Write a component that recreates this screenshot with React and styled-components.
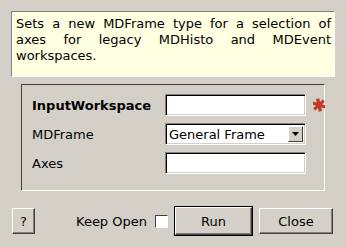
import styled, { createGlobalStyle } from 'styled-components';

const GlobalStyle = createGlobalStyle`
  html, body {
    margin: 0;
    padding: 0;
    background: #d4d0c8;
  }
  body {
    font-family: "DejaVu Sans", "Liberation Sans", sans-serif;
    font-size: 13px;
    color: #000000;
  }
`;

const Dialog = styled.div`
  width: 346px;
  height: 247px;
  box-sizing: border-box;
  padding: 11px 11px 0 11px;
  display: flex;
  flex-direction: column;
`;

const Description = styled.div`
  width: 324px;
  height: 66px;
  box-sizing: border-box;
  background: #ffffe1;
  border: 1px solid;
  border-color: #808080 #ffffff #ffffff #808080;
  padding: 4px 3px 0 4px;
  line-height: 16px;
  text-align: justify;
`;

const GroupBox = styled.div`
  margin: 7px 0 0 10px;
  width: 304px;
  height: 107px;
  box-sizing: border-box;
  border: 1px solid;
  border-color: #404040 #ffffff #ffffff #404040;
  padding: 9px 0 0 10px;
  display: grid;
  grid-template-columns: 133px 141px 20px;
  grid-auto-rows: 22px;
  row-gap: 7px;
  align-items: center;
`;

const Label = styled.span`
  font-weight: ${props => (props.bold ? 700 : 400)};
  white-space: nowrap;
`;

const Field = styled.div`
  height: 22px;
  box-sizing: border-box;
  background: #ffffff;
  border-top: 1px solid #808080;
  border-left: 1px solid #808080;
  border-bottom: 1px solid #ffffff;
  border-right: 1px solid #ffffff;
  box-shadow: inset 1px 1px 0 #000000, inset -1px -1px 0 #d4d0c8;
  display: flex;
  align-items: center;
  padding-left: 3px;
`;

const ComboText = styled.span`
  flex: 1;
`;

const ComboArrow = styled.div`
  width: 15px;
  height: 16px;
  margin-right: 2px;
  box-sizing: border-box;
  background: #d4d0c8;
  border-top: 1px solid #ffffff;
  border-left: 1px solid #ffffff;
  border-right: 1px solid #404040;
  border-bottom: 1px solid #404040;
  display: flex;
  align-items: center;
  justify-content: center;
`;

const Required = styled.div`
  display: flex;
  align-items: center;
  padding-left: 7px;
  height: 22px;
`;

const Footer = styled.div`
  margin-top: 16px;
  display: flex;
  align-items: center;
  height: 28px;
`;

const Button = styled.button`
  font-family: "DejaVu Sans", "Liberation Sans", sans-serif;
  font-size: 13px;
  color: #000000;
  background: #d4d0c8;
  height: ${props => props.h || '26px'};
  width: ${props => props.w};
  margin: 0 0 0 ${props => props.ml || '0'};
  box-sizing: border-box;
  padding: 0;
  border-top: 1px solid #ffffff;
  border-left: 1px solid #ffffff;
  border-right: 1px solid #404040;
  border-bottom: 1px solid #404040;
  box-shadow: inset -1px -1px 0 #808080;
  outline: ${props => (props.primary ? '1px solid #000000' : 'none')};
  outline-offset: 0;
`;

const KeepOpen = styled.label`
  margin-left: 41px;
  display: flex;
  align-items: center;
  gap: 8px;
`;

const CheckBox = styled.span`
  width: 13px;
  height: 13px;
  box-sizing: border-box;
  background: #ffffff;
  border-top: 1px solid #404040;
  border-left: 1px solid #404040;
  border-right: 1px solid #ffffff;
  border-bottom: 1px solid #ffffff;
`;

function Asterisk() {
  return (
    <svg width="12" height="14" viewBox="0 0 12 14">
      <g fill="#c4372b" transform="translate(6 7) rotate(-12)">
        <rect x="-1.6" y="-6.5" width="3.2" height="13" />
        <rect x="-1.6" y="-6.5" width="3.2" height="13" transform="rotate(60)" />
        <rect x="-1.6" y="-6.5" width="3.2" height="13" transform="rotate(-60)" />
      </g>
    </svg>
  );
}

export default function App() {
  return (
    <>
      <GlobalStyle />
      <Dialog>
        <Description>
          Sets a new MDFrame type for a selection of axes for legacy MDHisto and MDEvent workspaces.
        </Description>
        <GroupBox>
          <Label bold>InputWorkspace</Label>
          <Field />
          <Required>
            <Asterisk />
          </Required>
          <Label>MDFrame</Label>
          <Field>
            <ComboText>General Frame</ComboText>
            <ComboArrow>
              <svg width="7" height="4" viewBox="0 0 7 4">
                <polygon points="0,0 7,0 3.5,4" fill="#000000" />
              </svg>
            </ComboArrow>
          </Field>
          <span />
          <Label>Axes</Label>
          <Field />
          <span />
        </GroupBox>
        <Footer>
          <Button w="23px" ml="1px">?</Button>
          <KeepOpen>
            Keep Open
            <CheckBox />
          </KeepOpen>
          <Button w="77px" h="28px" ml="7px" primary>Run</Button>
          <Button w="74px" ml="7px">Close</Button>
        </Footer>
      </Dialog>
    </>
  );
}
